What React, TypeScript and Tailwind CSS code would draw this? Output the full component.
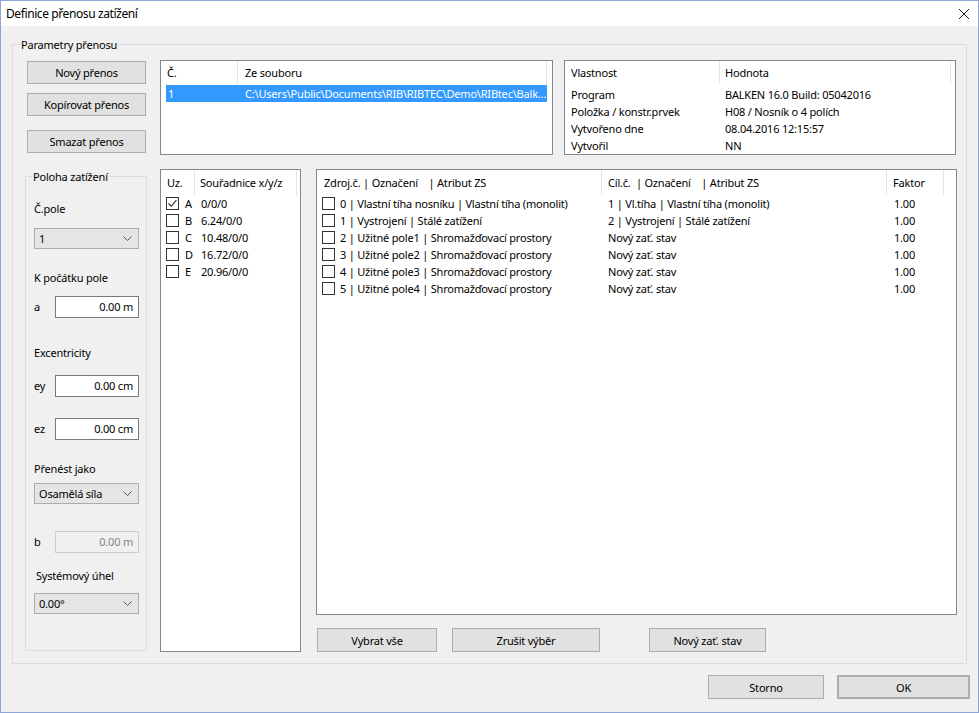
import React from "react";

function Btn({ children, className = "" }: { children: React.ReactNode; className?: string }) {
  return (
    <button
      className={`flex items-center justify-center border border-[#adadad] bg-[#e1e1e1] text-[11px] leading-none tracking-[-0.2px] text-black ${className}`}
    >
      {children}
    </button>
  );
}

function Check({ checked = false }: { checked?: boolean }) {
  return (
    <div className="flex h-[13px] w-[13px] shrink-0 items-center justify-center border border-[#333] bg-white">
      {checked && (
        <svg width="11" height="11" viewBox="0 0 11 11">
          <path d="M1.5 5.5 L4.2 8.2 L9.5 2.2" fill="none" stroke="#333" strokeWidth="1.1" />
        </svg>
      )}
    </div>
  );
}

function Chevron() {
  return (
    <svg width="9" height="5" viewBox="0 0 9 5">
      <path d="M0.5 0.5 L4.5 4.5 L8.5 0.5" fill="none" stroke="#555" strokeWidth="1" />
    </svg>
  );
}

function Combo({ value }: { value: string }) {
  return (
    <div className="flex h-[21px] w-[105px] items-center justify-between border border-[#acacac] bg-[#e5e5e5] pl-[4px] pr-[6px]">
      <span>{value}</span>
      <Chevron />
    </div>
  );
}

function Field({ label, value, disabled = false }: { label: string; value: string; disabled?: boolean }) {
  return (
    <div className="flex items-center">
      <span className="w-[21px]">{label}</span>
      <div
        className={`flex h-[22px] w-[84px] items-center justify-end pr-[5px] border ${
          disabled ? "border-[#cccccc] bg-[#f0f0f0] text-[#838383]" : "border-[#7a7a7a] bg-white"
        }`}
      >
        {value}
      </div>
    </div>
  );
}

const srcRows = [
  ["0 | Vlastní tíha nosníku | Vlastní tíha (monolit)", "1 | Vl.tíha | Vlastní tíha (monolit)"],
  ["1 | Vystrojení | Stálé zatížení", "2 | Vystrojení | Stálé zatížení"],
  ["2 | Užitné pole1 | Shromažďovací prostory", "Nový zať. stav"],
  ["3 | Užitné pole2 | Shromažďovací prostory", "Nový zať. stav"],
  ["4 | Užitné pole3 | Shromažďovací prostory", "Nový zať. stav"],
  ["5 | Užitné pole4 | Shromažďovací prostory", "Nový zať. stav"],
];

const points = [
  ["A", "0/0/0", true],
  ["B", "6.24/0/0", false],
  ["C", "10.48/0/0", false],
  ["D", "16.72/0/0", false],
  ["E", "20.96/0/0", false],
] as const;

const props = [
  ["Program", "BALKEN 16.0 Build: 05042016"],
  ["Položka / konstr.prvek", "H08 / Nosník o 4 polích"],
  ["Vytvořeno dne", "08.04.2016 12:15:57"],
  ["Vytvořil", "NN"],
];

export default function App() {
  return (
    <div className="flex h-[713px] w-[979px] flex-col border border-[#8fa6d4] bg-[#f0f0f0] font-['Noto_Sans',sans-serif] text-[11px] leading-[16px] tracking-[-0.2px] text-black">
      {/* title bar */}
      <div className="flex h-[25px] shrink-0 items-center justify-between bg-white pl-[5px] pr-[8px]">
        <span className="text-[12px] tracking-[-0.4px]">Definice přenosu zatížení</span>
        <svg width="12" height="12" viewBox="0 0 12 12">
          <path d="M1 1 L11 11 M11 1 L1 11" stroke="#111" strokeWidth="1" />
        </svg>
      </div>

      <fieldset className="ml-[11px] mt-[11px] h-[627px] w-[955px] border border-[#dcdcdc]">
        <legend className="ml-[7px] px-[1px] leading-[15px]">Parametry přenosu</legend>
        <div className="flex flex-col pl-[12px] pt-[8px]">
          {/* top row */}
          <div className="flex h-[95px]">
            <div className="flex w-[122px] flex-col pl-[2px]">
              <Btn className="mt-[1px] h-[23px] w-[119px]">Nový přenos</Btn>
              <Btn className="mt-[9px] h-[23px] w-[119px]">Kopírovat přenos</Btn>
              <Btn className="mt-[14px] h-[23px] w-[119px]">Smazat přenos</Btn>
            </div>

            <div className="ml-[13px] flex h-[95px] w-[393px] flex-col border border-[#828790] bg-white">
              <div className="flex h-[23px] items-center">
                <div className="h-full w-[77px] border-r border-[#e5e5e5] pl-[6px] pt-[4px]">Č.</div>
                <div className="h-full w-[309px] border-r border-[#e5e5e5] pl-[7px] pt-[4px]">Ze souboru</div>
              </div>
              <div className="ml-[5px] mt-[1px] flex h-[17px] w-[381px] items-center bg-[#3399ff] text-white">
                <span className="w-[72px] shrink-0 pl-[2px]">1</span>
                <span className="overflow-hidden whitespace-nowrap pl-[7px]">
                  C:\Users\Public\Documents\RIB\RIBTEC\Demo\RIBtec\Balk…
                </span>
              </div>
            </div>

            <div className="ml-[11px] flex h-[95px] w-[392px] flex-col border border-[#828790] bg-white">
              <div className="flex h-[23px] items-center">
                <div className="h-full w-[155px] border-r border-[#e5e5e5] pl-[6px] pt-[4px]">Vlastnost</div>
                <div className="h-full w-[231px] border-r border-[#e5e5e5] pl-[5px] pt-[4px]">Hodnota</div>
              </div>
              <div className="mt-[2px] flex flex-col">
                {props.map(([k, v]) => (
                  <div key={k} className="flex h-[17px] items-center">
                    <span className="w-[155px] shrink-0 pl-[6px]">{k}</span>
                    <span className="pl-[5px]">{v}</span>
                  </div>
                ))}
              </div>
            </div>
          </div>

          {/* second row */}
          <div className="mt-[14px] flex h-[483px]">
            <fieldset className="h-[482px] w-[122px] border border-[#dcdcdc]">
              <legend className="ml-[6px] px-[1px] leading-[15px]">Poloha zatížení</legend>
              <div className="flex flex-col pl-[8px]">
                <span className="mt-[17px]">Č.pole</span>
                <div className="mt-[11px]">
                  <Combo value="1" />
                </div>
                <span className="mt-[21px]">K počátku pole</span>
                <div className="mt-[10px]">
                  <Field label="a" value="0.00 m" />
                </div>
                <span className="mt-[27px]">Excentricity</span>
                <div className="mt-[14px]">
                  <Field label="ey" value="0.00 cm" />
                </div>
                <div className="mt-[21px]">
                  <Field label="ez" value="0.00 cm" />
                </div>
                <span className="mt-[21px]">Přenést jako</span>
                <div className="mt-[6px]">
                  <Combo value="Osamělá síla" />
                </div>
                <div className="mt-[27px]">
                  <Field label="b" value="0.00 m" disabled />
                </div>
                <span className="mt-[15px] pl-[2px]">Systémový úhel</span>
                <div className="mt-[9px]">
                  <Combo value="0.00°" />
                </div>
              </div>
            </fieldset>

            <div className="ml-[13px] flex h-[483px] w-[141px] flex-col border border-[#828790] bg-white">
              <div className="flex h-[25px]">
                <div className="h-full w-[34px] border-r border-[#e5e5e5] pl-[6px] pt-[5px]">Uz.</div>
                <div className="h-full w-[102px] border-r border-[#e5e5e5] pl-[5px] pt-[5px]">Souřadnice x/y/z</div>
              </div>
              {points.map(([id, xyz, on]) => (
                <div key={id} className="flex h-[17px] items-center pl-[5px]">
                  <Check checked={on} />
                  <span className="w-[22px] pl-[6px]">{id}</span>
                  <span>{xyz}</span>
                </div>
              ))}
            </div>

            <div className="ml-[15px] flex flex-col">
              <div className="flex h-[447px] w-[641px] flex-col border border-[#828790] bg-white">
                <div className="flex h-[25px]">
                  <div className="h-full w-[285px] whitespace-pre border-r border-[#e5e5e5] pl-[7px] pt-[5px]">
                    Zdroj.č. | Označení    | Atribut ZS
                  </div>
                  <div className="h-full w-[285px] whitespace-pre border-r border-[#e5e5e5] pl-[6px] pt-[5px]">
                    Cíl.č.  | Označení    | Atribut ZS
                  </div>
                  <div className="h-full w-[57px] border-r border-[#e5e5e5] pl-[6px] pt-[5px]">Faktor</div>
                </div>
                {srcRows.map(([src, dst]) => (
                  <div key={src} className="flex h-[17px] items-center">
                    <div className="flex w-[285px] shrink-0 items-center pl-[5px]">
                      <Check />
                      <span className="pl-[5px]">{src}</span>
                    </div>
                    <span className="w-[285px] shrink-0 pl-[6px]">{dst}</span>
                    <span className="pl-[7px]">1.00</span>
                  </div>
                ))}
              </div>
              <div className="mt-[13px] flex">
                <Btn className="ml-[1px] h-[24px] w-[120px]">Vybrat vše</Btn>
                <Btn className="ml-[15px] h-[24px] w-[148px]">Zrušit výběr</Btn>
                <Btn className="ml-[49px] h-[24px] w-[117px]">Nový zať. stav</Btn>
              </div>
            </div>
          </div>
        </div>
      </fieldset>

      <div className="mt-[11px] flex justify-end gap-[13px] pr-[8px]">
        <Btn className="h-[24px] w-[116px]">Storno</Btn>
        <Btn className="h-[24px] w-[133px] border-2 border-[#0078d7]">OK</Btn>
      </div>
    </div>
  );
}
